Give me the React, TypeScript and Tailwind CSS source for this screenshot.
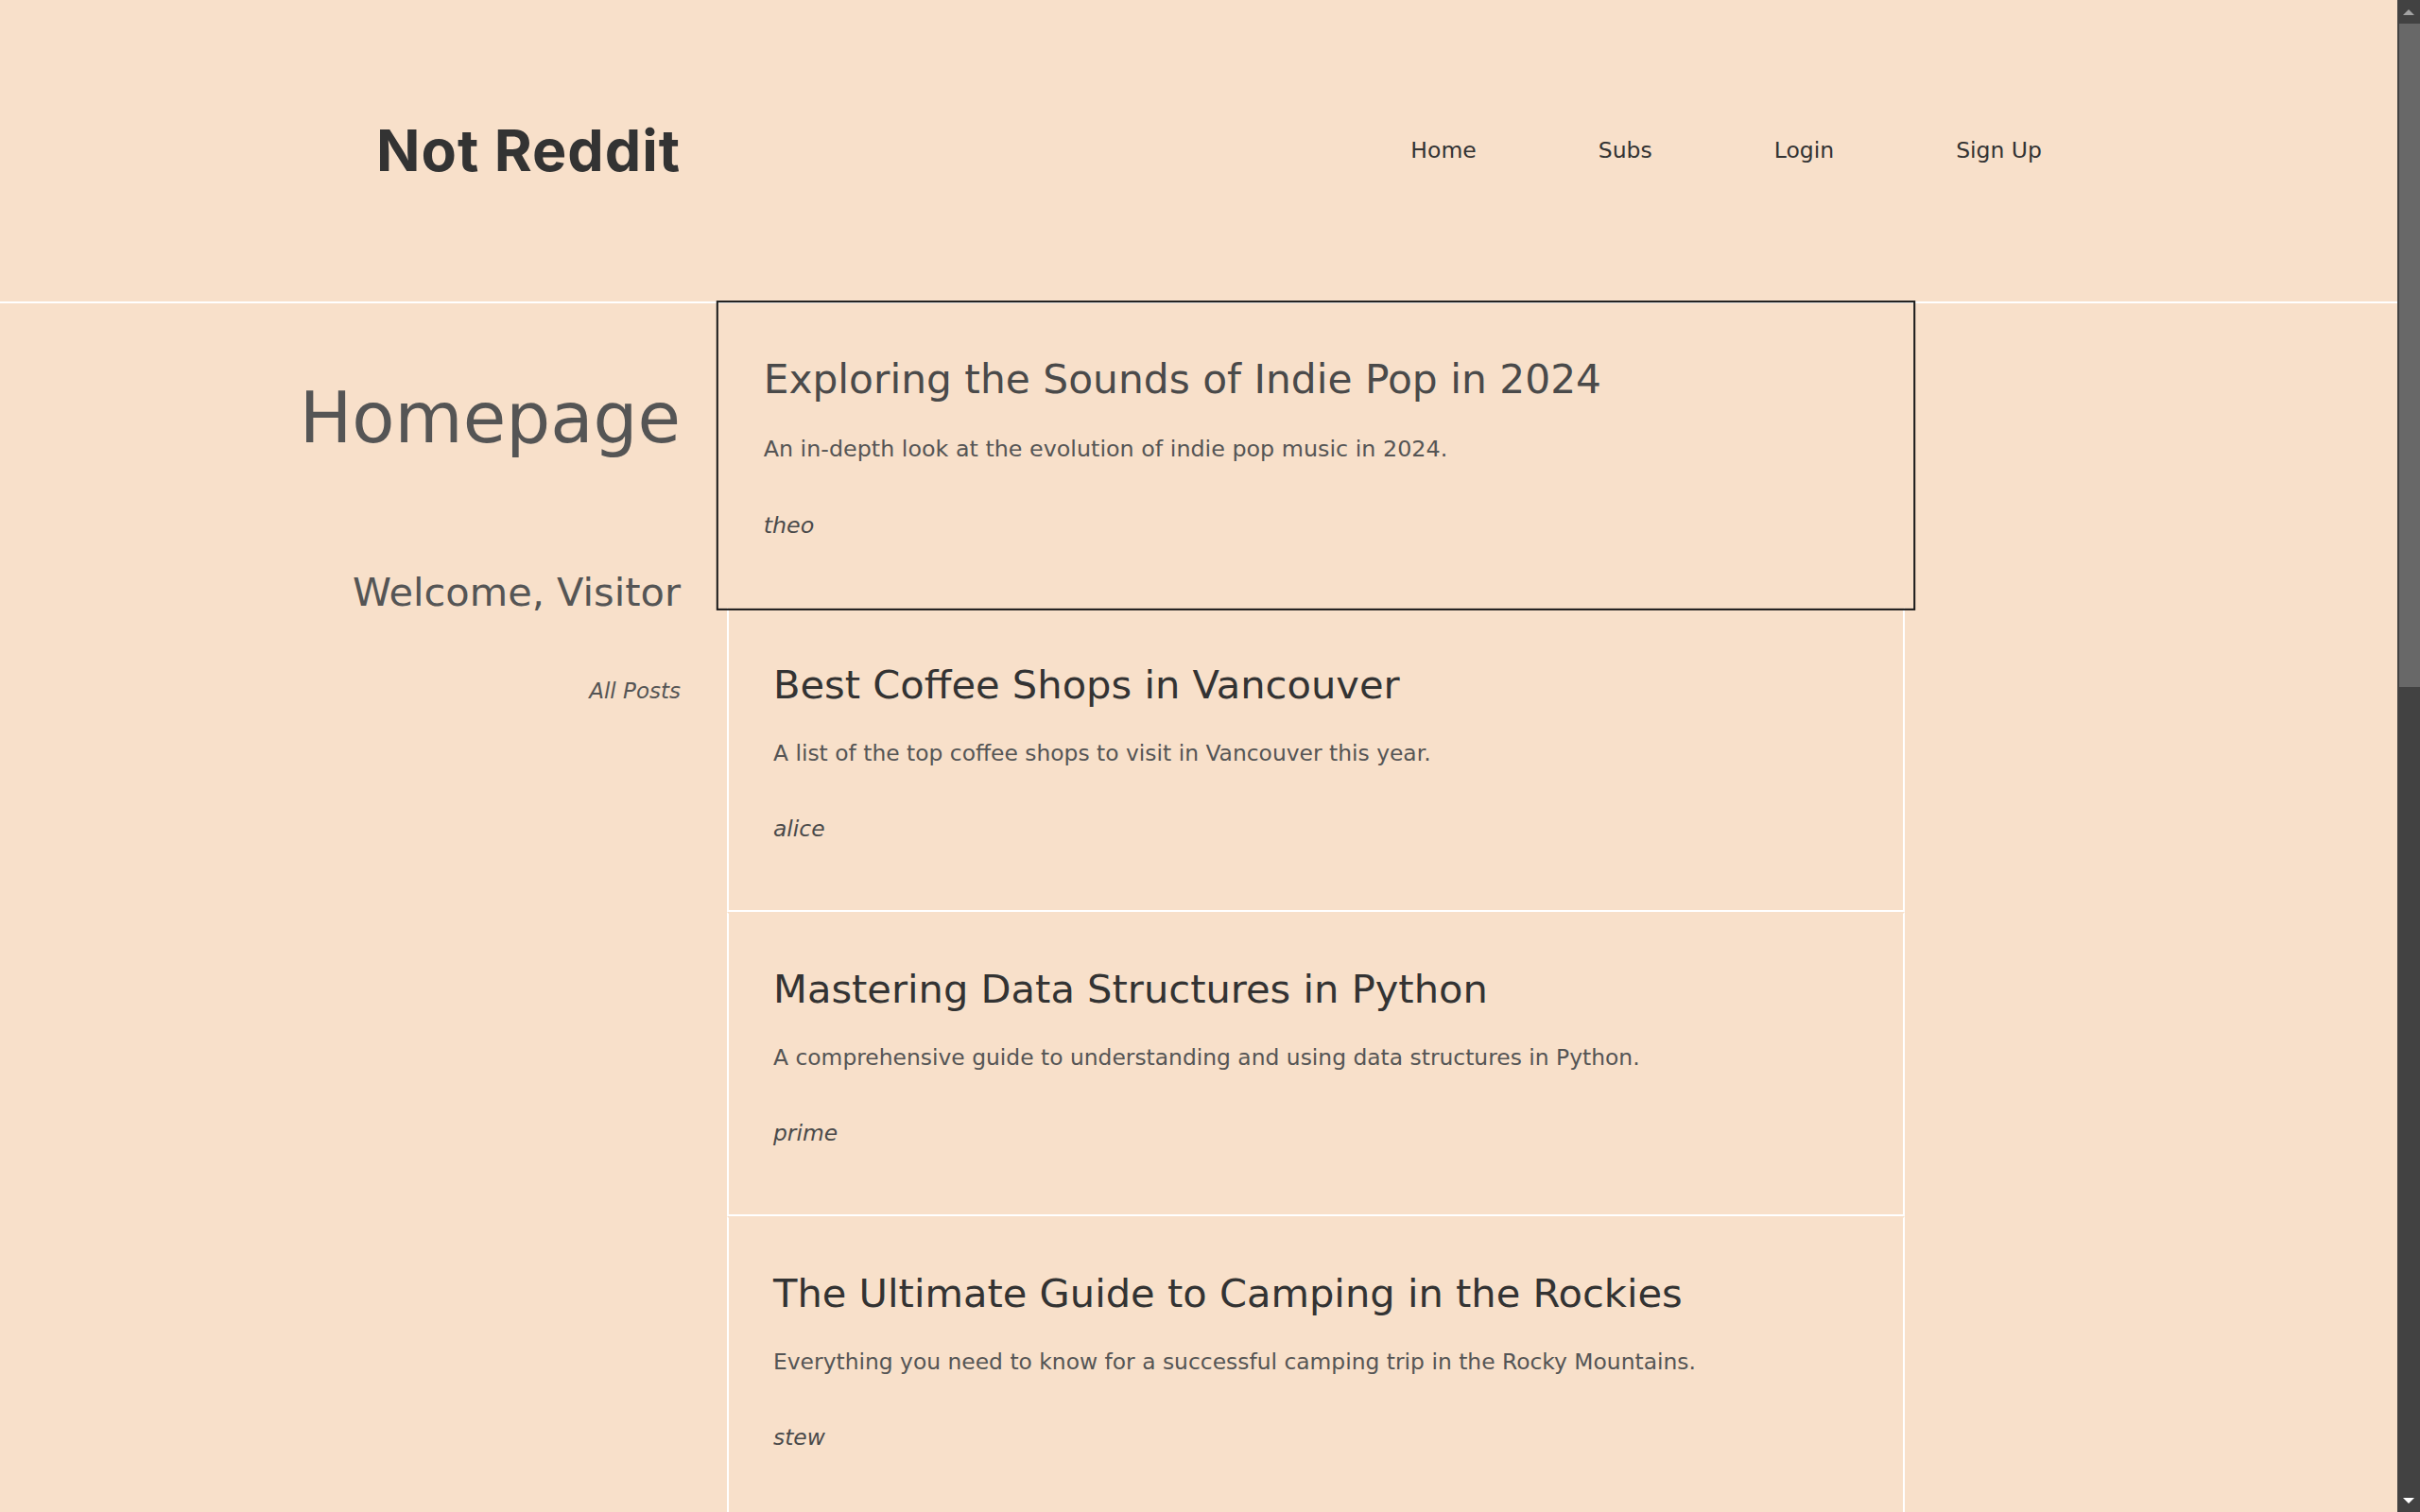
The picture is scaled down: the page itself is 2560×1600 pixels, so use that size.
import React from "react";

type Post = { title: string; desc: string; author: string };

const posts: Post[] = [
  {
    title: "Exploring the Sounds of Indie Pop in 2024",
    desc: "An in-depth look at the evolution of indie pop music in 2024.",
    author: "theo",
  },
  {
    title: "Best Coffee Shops in Vancouver",
    desc: "A list of the top coffee shops to visit in Vancouver this year.",
    author: "alice",
  },
  {
    title: "Mastering Data Structures in Python",
    desc: "A comprehensive guide to understanding and using data structures in Python.",
    author: "prime",
  },
  {
    title: "The Ultimate Guide to Camping in the Rockies",
    desc: "Everything you need to know for a successful camping trip in the Rocky Mountains.",
    author: "stew",
  },
];

function PostCard({ post, active }: { post: Post; active: boolean }) {
  return (
    <div
      className={
        active
          ? "relative z-10 box-border flex h-[322px] shrink-0 scale-[1.018] flex-col border-2 border-[#1a1a1a] px-[47px] pt-[59px]"
          : "box-border flex h-[322px] shrink-0 flex-col border-2 border-white border-t-transparent px-[47px] pt-[59px]"
      }
    >
      <h2
        className={
          "text-[41.6px] leading-[41px] font-normal " +
          (active ? "text-[#4a4a4a]" : "text-[#333333]")
        }
      >
        {post.title}
      </h2>
      <p className="mt-[41px] text-[23.4px] leading-[23.4px] text-[#555555]">
        {post.desc}
      </p>
      <p className="mt-[57px] text-[23.4px] leading-[23.4px] italic text-[#4a4a4a]">
        {post.author}
      </p>
    </div>
  );
}

function Scrollbar() {
  return (
    <div className="flex h-full w-[24px] shrink-0 flex-col bg-[#424242]">
      <div className="flex h-[25px] shrink-0 items-start justify-center pt-[10px]">
        <svg width="12" height="6" viewBox="0 0 12 6">
          <path d="M6 0 L12 6 L0 6 Z" fill="#a3a3a3" />
        </svg>
      </div>
      <div className="ml-[2px] h-[702px] shrink-0 bg-[#686868]" />
      <div className="flex-1" />
      <div className="flex h-[24px] shrink-0 items-start justify-center pt-[9px]">
        <svg width="12" height="6" viewBox="0 0 12 6">
          <path d="M0 0 L12 0 L6 6 Z" fill="#ffffff" />
        </svg>
      </div>
    </div>
  );
}

export default function App() {
  return (
    <div className="flex h-screen w-full overflow-hidden bg-[#f8e0ca]">
      <div className="h-full w-[2536px] shrink-0 overflow-hidden [font-family:'DejaVu_Sans','Noto_Sans',sans-serif]">
        <header className="box-border flex h-[321px] items-center justify-between border-b-2 border-white pl-[398px] pr-[376px]">
          <div className="[font-family:Inter,sans-serif] text-[61px] leading-none font-bold tracking-[1px] text-[#333333]">
            Not Reddit
          </div>
          <nav className="flex items-center gap-[129px] text-[23.5px] leading-none text-[#333333]">
            <a href="#">Home</a>
            <a href="#">Subs</a>
            <a href="#">Login</a>
            <a href="#">Sign Up</a>
          </nav>
        </header>
        <main className="flex">
          <aside className="box-border flex w-[720px] shrink-0 flex-col items-end pt-[84px] text-right text-[#555555]">
            <h1 className="text-[74px] leading-[74px] font-normal">Homepage</h1>
            <h3 className="mt-[127px] text-[41.5px] leading-[41.5px] font-normal">
              Welcome, Visitor
            </h3>
            <a href="#" className="mt-[72px] text-[23px] leading-[23px] italic">
              All Posts
            </a>
          </aside>
          <section className="ml-[49px] flex w-[1246px] shrink-0 flex-col">
            {posts.map((p, i) => (
              <PostCard key={i} post={p} active={i === 0} />
            ))}
          </section>
        </main>
      </div>
      <Scrollbar />
    </div>
  );
}
